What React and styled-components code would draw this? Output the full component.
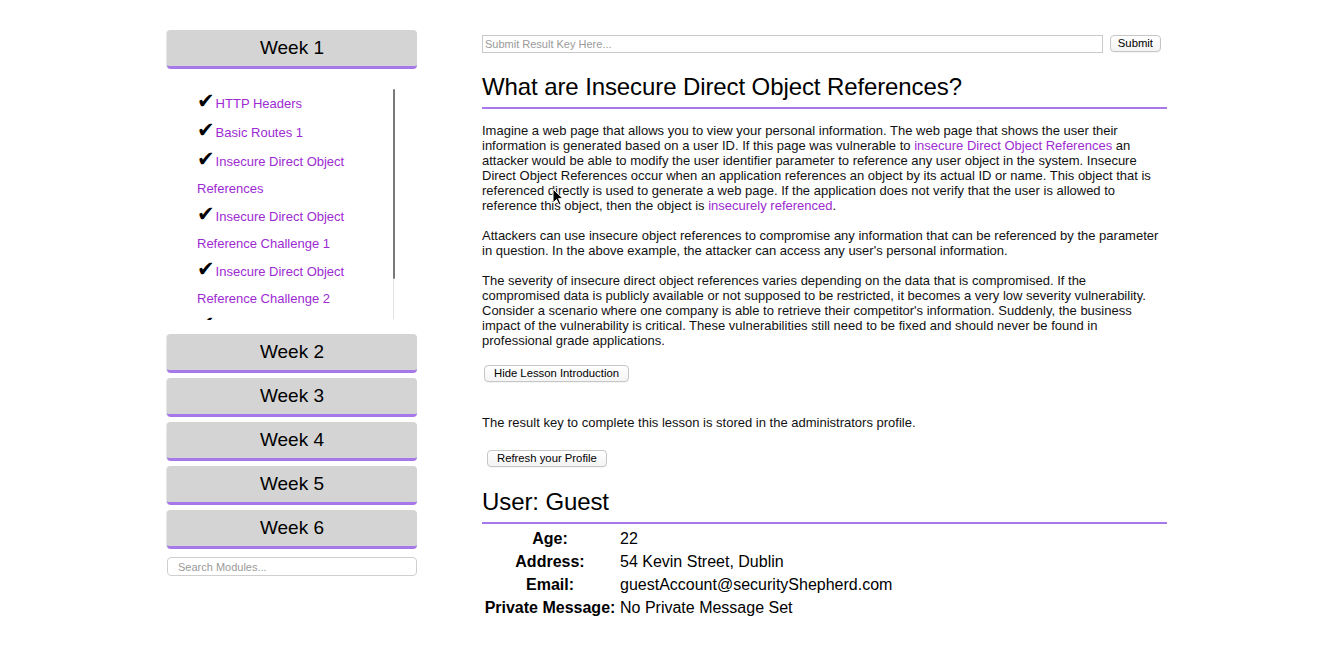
import React from "react";
import styled, { createGlobalStyle } from "styled-components";

const GlobalStyle = createGlobalStyle`
  html, body { margin: 0; padding: 0; background: #ffffff; }
  body {
    font-family: "Liberation Sans", Arial, Helvetica, sans-serif;
    color: #111;
  }
`;

const PURPLE = "#a678e9";
const LINK = "#9d2bd1";

const Page = styled.div`
  width: 1000px;
  margin-left: calc(50% - 499px);
  padding-top: 30px;
  display: flex;
  gap: 65px;
  position: relative;
`;

const Sidebar = styled.aside`
  width: 250px;
  flex: none;
  display: flex;
  flex-direction: column;
`;

const WeekStack = styled.div`
  display: flex;
  flex-direction: column;
  gap: 5px;
`;

const WeekButton = styled.div`
  box-sizing: border-box;
  height: 39px;
  background: #d4d4d4;
  border-radius: 4px;
  border-bottom: 3px solid ${PURPLE};
  box-shadow: -1px 0 0 #e6e6e6;
  font-size: 19px;
  line-height: 36px;
  text-align: center;
  color: #000;
  cursor: pointer;
`;

const ScrollBox = styled.div`
  position: relative;
  height: 234px;
  margin: 17px 0 14px;
  padding: 2px 0 0 30px;
  box-sizing: border-box;
  overflow: hidden;
`;

const ScrollThumb = styled.div`
  position: absolute;
  left: 226px;
  top: 3px;
  width: 2px;
  height: 190px;
  background: #7a7a7a;
  border-radius: 1px;
`;

const ScrollTrack = styled.div`
  position: absolute;
  left: 226px;
  top: 193px;
  width: 1px;
  height: 40px;
  background: #e2e2e2;
`;

const Item = styled.div`
  display: flex;
  flex-direction: column;
`;

const CheckRow = styled.div`
  height: 29px;
  display: flex;
  align-items: baseline;
`;

const WrapRow = styled.div`
  height: 26px;
  line-height: 26px;
`;

const Check = styled.span`
  font-family: "DejaVu Sans", sans-serif;
  font-size: 21px;
  line-height: 26px;
  color: #000;
  margin-right: 1px;
`;

const ModuleLink = styled.a`
  font-size: 13px;
  line-height: 26px;
  color: ${LINK};
  text-decoration: none;
  white-space: nowrap;
`;

const Search = styled.input`
  box-sizing: border-box;
  margin-top: 8px;
  height: 19px;
  width: 250px;
  border: 1px solid #cfcfcf;
  border-radius: 4px;
  padding: 0 10px;
  font-family: "Liberation Sans", Arial, sans-serif;
  font-size: 11px;
  outline: none;
  &::placeholder { color: #9a9a9a; }
`;

const Main = styled.main`
  flex: 1;
  padding-top: 5px;
  display: flex;
  flex-direction: column;
  align-items: stretch;
`;

const KeyForm = styled.form`
  display: flex;
  gap: 7px;
  padding-right: 6px;
  margin: 0;
  align-items: flex-start;
`;

const KeyInput = styled.input`
  flex: 1;
  box-sizing: border-box;
  height: 18px;
  border: 1px solid #c9c9c9;
  padding: 0 2px;
  font-family: "Liberation Sans", Arial, sans-serif;
  font-size: 11px;
  outline: none;
  &::placeholder { color: #9a9a9a; }
`;

const SmallButton = styled.button`
  box-sizing: border-box;
  height: 17px;
  padding: 0 ${(p) => p.$pad || 9}px;
  margin: ${(p) => p.$margin || "0"};
  align-self: flex-start;
  font-family: "Liberation Sans", Arial, sans-serif;
  font-size: 11.3px;
  line-height: 15px;
  color: #000;
  background: linear-gradient(#ffffff, #f4f4f4);
  border: 1px solid #c6c6c6;
  border-radius: 4px;
  box-shadow: 0 1px 0 rgba(0, 0, 0, 0.04);
  cursor: pointer;
`;

const Heading = styled.h2`
  margin: ${(p) => p.$top}px 0 0;
  padding-bottom: 6px;
  border-bottom: 2px solid ${PURPLE};
  font-size: 24px;
  font-weight: normal;
  line-height: 28px;
  color: #000;
  letter-spacing: -0.1px;
`;

const Intro = styled.div`
  margin-top: 14px;
  display: flex;
  flex-direction: column;
  gap: 15px;
`;

const Para = styled.p`
  margin: ${(p) => p.$top || 0}px 0 0;
  font-size: 13px;
  line-height: 15px;
  white-space: nowrap;
  color: #111;
`;

const InlineLink = styled.a`
  color: ${LINK};
  text-decoration: none;
`;

const InfoGrid = styled.div`
  margin-top: 3px;
  display: grid;
  grid-template-columns: 136px 1fr;
  column-gap: 2px;
  grid-auto-rows: 23px;
  align-items: center;
  font-size: 16px;
  color: #000;
`;

const Label = styled.div`
  font-weight: bold;
  text-align: center;
  white-space: nowrap;
`;

const Value = styled.div`
  white-space: nowrap;
`;

const Cursor = styled.svg`
  position: absolute;
  left: 385px;
  top: 188px;
  width: 12px;
  height: 18px;
  pointer-events: none;
`;

const modules = [
  ["HTTP Headers"],
  ["Basic Routes 1"],
  ["Insecure Direct Object", "References"],
  ["Insecure Direct Object", "Reference Challenge 1"],
  ["Insecure Direct Object", "Reference Challenge 2"],
  ["Poor Data Validation"],
];

const info = [
  ["Age:", "22"],
  ["Address:", "54 Kevin Street, Dublin"],
  ["Email:", "guestAccount@securityShepherd.com"],
  ["Private Message:", "No Private Message Set"],
];

export default function App() {
  return (
    <>
      <GlobalStyle />
      <Page>
        <Sidebar>
          <WeekButton>Week 1</WeekButton>
          <ScrollBox>
            {modules.map((lines, i) => (
              <Item key={i}>
                <CheckRow>
                  <Check>✔</Check>
                  <ModuleLink href="#">{lines[0]}</ModuleLink>
                </CheckRow>
                {lines.slice(1).map((l, j) => (
                  <WrapRow key={j}>
                    <ModuleLink href="#">{l}</ModuleLink>
                  </WrapRow>
                ))}
              </Item>
            ))}
            <ScrollThumb />
            <ScrollTrack />
          </ScrollBox>
          <WeekStack>
            {[2, 3, 4, 5, 6].map((n) => (
              <WeekButton key={n}>Week {n}</WeekButton>
            ))}
          </WeekStack>
          <Search placeholder="Search Modules..." />
        </Sidebar>

        <Main>
          <KeyForm onSubmit={(e) => e.preventDefault()}>
            <KeyInput placeholder="Submit Result Key Here..." />
            <SmallButton type="submit" $pad={7}>Submit</SmallButton>
          </KeyForm>

          <Heading $top={20}>What are Insecure Direct Object References?</Heading>

          <Intro>
            <Para>
              Imagine a web page that allows you to view your personal information. The web page that shows the user their
              <br />
              information is generated based on a user ID. If this page was vulnerable to{" "}
              <InlineLink href="#">insecure Direct Object References</InlineLink> an
              <br />
              attacker would be able to modify the user identifier parameter to reference any user object in the system. Insecure
              <br />
              Direct Object References occur when an application references an object by its actual ID or name. This object that is
              <br />
              referenced directly is used to generate a web page. If the application does not verify that the user is allowed to
              <br />
              reference this object, then the object is <InlineLink href="#">insecurely referenced</InlineLink>.
            </Para>
            <Para>
              Attackers can use insecure object references to compromise any information that can be referenced by the parameter
              <br />
              in question. In the above example, the attacker can access any user's personal information.
            </Para>
            <Para>
              The severity of insecure direct object references varies depending on the data that is compromised. If the
              <br />
              compromised data is publicly available or not supposed to be restricted, it becomes a very low severity vulnerability.
              <br />
              Consider a scenario where one company is able to retrieve their competitor's information. Suddenly, the business
              <br />
              impact of the vulnerability is critical. These vulnerabilities still need to be fixed and should never be found in
              <br />
              professional grade applications.
            </Para>
          </Intro>

          <SmallButton $margin="17px 0 0 2px">Hide Lesson Introduction</SmallButton>

          <Para $top={33}>The result key to complete this lesson is stored in the administrators profile.</Para>

          <SmallButton $margin="20px 0 0 5px">Refresh your Profile</SmallButton>

          <Heading $top={21}>User: Guest</Heading>

          <InfoGrid>
            {info.map(([k, v]) => (
              <React.Fragment key={k}>
                <Label>{k}</Label>
                <Value>{v}</Value>
              </React.Fragment>
            ))}
          </InfoGrid>
        </Main>

        <Cursor viewBox="0 0 12 18">
          <path d="M1 1 L1 15 L4.5 11.5 L7 17 L9 16 L6.6 10.6 L11 10.6 Z" fill="#000" stroke="#fff" strokeWidth="1" strokeLinejoin="round" />
        </Cursor>
      </Page>
    </>
  );
}
